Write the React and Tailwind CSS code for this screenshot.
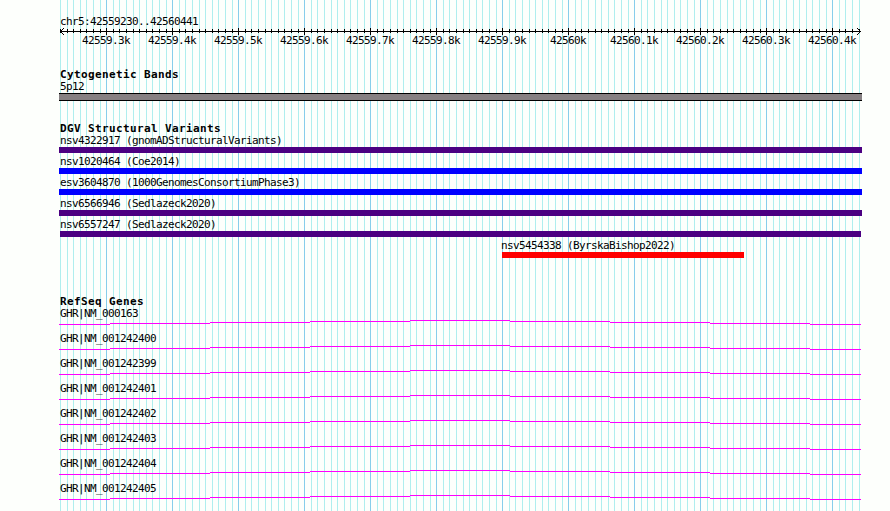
const MAJOR_TICKS = [
  { x: 106, label: '42559.3k' },
  { x: 172, label: '42559.4k' },
  { x: 238, label: '42559.5k' },
  { x: 304, label: '42559.6k' },
  { x: 370, label: '42559.7k' },
  { x: 436, label: '42559.8k' },
  { x: 502, label: '42559.9k' },
  { x: 568, label: '42560k' },
  { x: 634, label: '42560.1k' },
  { x: 700, label: '42560.2k' },
  { x: 766, label: '42560.3k' },
  { x: 832, label: '42560.4k' },
]

const MINOR_OFFSETS = [7, 13, 20, 27, 33, 40, 46, 53, 60]

const minorTicks = [40, ...MAJOR_TICKS.map((tick) => tick.x)]
  .flatMap((x) => MINOR_OFFSETS.map((offset) => x + offset))
  .filter((x) => x >= 60 && x < 861)

const variants = [
  { name: 'nsv4322917 (gnomADStructuralVariants)', bar: 'w-[803px] bg-[#4b0082]' },
  { name: 'nsv1020464 (Coe2014)', bar: 'w-[803px] bg-[#0000ff]' },
  { name: 'esv3604870 (1000GenomesConsortiumPhase3)', bar: 'w-[803px] bg-[#0000ff]' },
  { name: 'nsv6566946 (Sedlazeck2020)', bar: 'w-[803px] bg-[#4b0082]' },
  { name: 'nsv6557247 (Sedlazeck2020)', bar: 'ml-px w-[801px] bg-[#4b0082]' },
  { name: 'nsv5454338 (ByrskaBishop2022)', row: 'pl-[441px]', bar: 'ml-[2px] w-[242px] bg-[#ff0000]' },
]

const genes = [
  'GHR|NM_000163',
  'GHR|NM_001242400',
  'GHR|NM_001242399',
  'GHR|NM_001242401',
  'GHR|NM_001242402',
  'GHR|NM_001242403',
  'GHR|NM_001242404',
  'GHR|NM_001242405',
]

function GridLines() {
  return (
    <svg className="absolute inset-0" width="890" height="511" shapeRendering="crispEdges">
      {minorTicks.map((x) => (
        <rect key={x} x={x} y="0" width="1" height="511" fill="#afeeee" />
      ))}
      {MAJOR_TICKS.map(({ x }) => (
        <rect key={x} x={x} y="0" width="1" height="511" fill="#87ceeb" />
      ))}
    </svg>
  )
}

function Ruler() {
  return (
    <div>
      <p className="h-[13px] pl-px leading-[13px]">chr5:42559230..42560441</p>
      <svg className="block" width="831" height="7" viewBox="59 28 831 7" shapeRendering="crispEdges">
        <rect x="60" y="31" width="801" height="1" />
        {minorTicks.map((x) => (
          <rect key={x} x={x} y="29" width="1" height="4" />
        ))}
        {MAJOR_TICKS.map(({ x }) => (
          <rect key={x} x={x} y="28" width="1" height="7" />
        ))}
        <path d="M61 30h1v1h-1zM62 29h1v1h-1zM63 28h1v1h-1zM61 32h1v1h-1zM62 33h1v1h-1zM63 34h1v1h-1z" />
        <path d="M859 30h1v1h-1zM858 29h1v1h-1zM857 28h1v1h-1zM859 32h1v1h-1zM858 33h1v1h-1zM857 34h1v1h-1z" />
      </svg>
      <div className="-mt-px flex h-[13px] pl-[14px] leading-[13px]">
        {MAJOR_TICKS.map(({ x, label }) => (
          <span key={x} className="w-[66px] shrink-0 text-center">
            {label}
          </span>
        ))}
      </div>
    </div>
  )
}

function TrackTitle({ children }) {
  return <h2 className="h-[12px] pl-px text-[11px] leading-[13px] font-bold tracking-[0.38px]">{children}</h2>
}

function Variant({ name, row, bar }) {
  return (
    <div className={`h-[21px] ${row ?? ''}`}>
      <p className="h-[13px] pl-px leading-[13px]">{name}</p>
      <div className={`h-[6px] ${bar}`} />
    </div>
  )
}

function Gene({ name }) {
  return (
    <div className="h-[25px]">
      <p className="h-[13px] pl-px leading-[13px]">{name}</p>
      <svg className="block" width="803" height="5" shapeRendering="crispEdges" fill="#ff00ff">
        <rect x="0" y="4" width="51" height="1" />
        <rect x="51" y="3" width="100" height="1" />
        <rect x="151" y="2" width="100" height="1" />
        <rect x="251" y="1" width="100" height="1" />
        <rect x="351" y="0" width="100" height="1" />
        <rect x="451" y="1" width="100" height="1" />
        <rect x="551" y="2" width="100" height="1" />
        <rect x="651" y="3" width="100" height="1" />
        <rect x="751" y="4" width="51" height="1" />
      </svg>
    </div>
  )
}

export default function App() {
  return (
    <div className="relative h-[511px] w-[890px] overflow-hidden bg-[#fdfffc]">
      <GridLines />
      <main className="relative pt-[15px] pl-[59px] font-['DejaVu_Sans_Mono',monospace] text-[11px] tracking-[-0.62px] whitespace-pre text-black">
        <Ruler />

        <section className="mt-[21px]">
          <TrackTitle>Cytogenetic Bands</TrackTitle>
          <p className="h-[13px] pl-px leading-[13px]">5p12</p>
          <div className="h-[8px] w-[803px] border-y border-black bg-[#868082]" />
        </section>

        <section className="mt-[21px]">
          <TrackTitle>DGV Structural Variants</TrackTitle>
          {variants.map((variant) => (
            <Variant key={variant.name} {...variant} />
          ))}
        </section>

        <section className="mt-[35px]">
          <TrackTitle>RefSeq Genes</TrackTitle>
          {genes.map((name) => (
            <Gene key={name} name={name} />
          ))}
        </section>
      </main>
    </div>
  )
}
